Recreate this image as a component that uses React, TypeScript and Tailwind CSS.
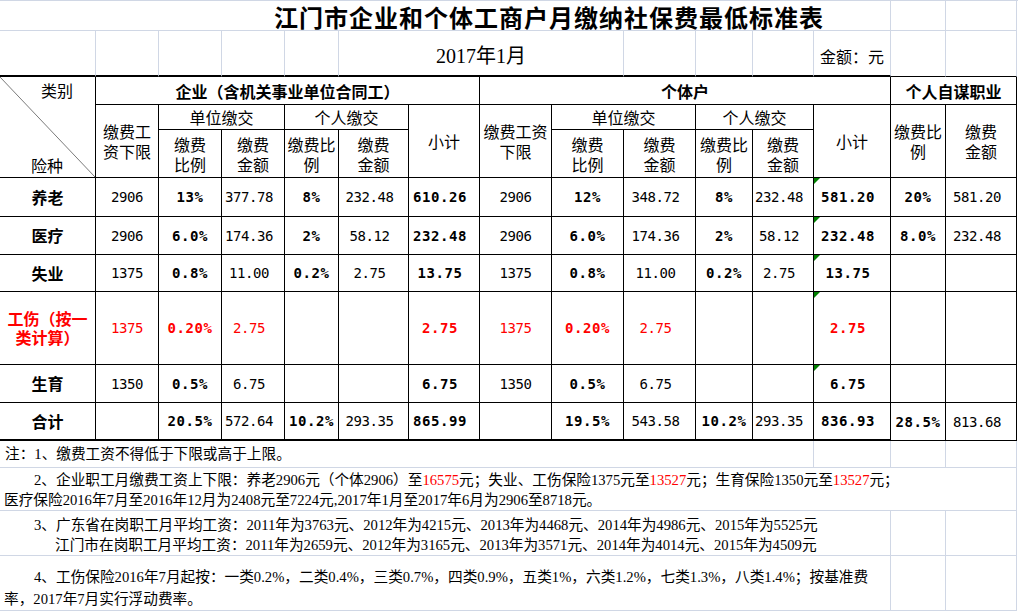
import React from 'react'

const CN = "font-['Noto_Sans_CJK_SC',sans-serif]"
const SERIF = "font-['Liberation_Serif','Noto_Sans_CJK_SC',serif]"
const NUM = "font-['DejaVu_Sans_Mono','Noto_Sans_CJK_SC',monospace] text-[14px]"

type CellProps = {
  className?: string
  grid?: boolean
  thick?: boolean
  children?: React.ReactNode
}

// one spreadsheet cell: draws its own right and bottom line
function Cell({ className = '', grid = false, thick = false, children }: CellProps) {
  const color = grid ? 'border-[#d0d7e5]' : 'border-black'
  const bottom = thick ? 'border-b-2' : 'border-b'
  return (
    <div className={`relative flex items-center justify-center text-center border-r ${bottom} ${color} ${className}`}>
      {children}
    </div>
  )
}

// two-line header label
function Two({ a, b }: { a: string; b: string }) {
  return (
    <div className="flex flex-col items-center">
      <span>{a}</span>
      <span>{b}</span>
    </div>
  )
}

type DataRow = {
  label: React.ReactNode
  red?: boolean
  vals: string[]
  tri?: boolean
  last?: boolean
}

const rows: DataRow[] = [
  {
    label: '养老',
    tri: true,
    vals: ['2906', '13%', '377.78', '8%', '232.48', '610.26', '2906', '12%', '348.72', '8%', '232.48', '581.20', '20%', '581.20'],
  },
  {
    label: '医疗',
    tri: true,
    vals: ['2906', '6.0%', '174.36', '2%', '58.12', '232.48', '2906', '6.0%', '174.36', '2%', '58.12', '232.48', '8.0%', '232.48'],
  },
  {
    label: '失业',
    tri: true,
    vals: ['1375', '0.8%', '11.00', '0.2%', '2.75', '13.75', '1375', '0.8%', '11.00', '0.2%', '2.75', '13.75', '', ''],
  },
  {
    label: '工伤（按一类计算）',
    red: true,
    tri: true,
    vals: ['1375', '0.20%', '2.75', '', '', '2.75', '1375', '0.20%', '2.75', '', '', '2.75', '', ''],
  },
  {
    label: '生育',
    tri: true,
    vals: ['1350', '0.5%', '6.75', '', '', '6.75', '1350', '0.5%', '6.75', '', '', '6.75', '', ''],
  },
  {
    label: '合计',
    last: true,
    vals: ['', '20.5%', '572.64', '10.2%', '293.35', '865.99', '', '19.5%', '543.58', '10.2%', '293.35', '836.93', '28.5%', '813.68'],
  },
]

const boldCols = [1, 3, 5, 7, 9, 11, 12]
const amountCols = [2, 4, 5, 8, 10, 11, 13]

function Triangle() {
  return (
    <svg className="absolute left-0 top-0" width="6" height="6" viewBox="0 0 6 6">
      <polygon points="0,0 6,0 0,6" fill="#008000" />
    </svg>
  )
}

function Red({ children }: { children: React.ReactNode }) {
  return <span className="text-[#ff0000]">{children}</span>
}

export default function App() {
  return (
    <div className="w-[1018px] h-[612px] bg-white overflow-hidden text-black">
      <div
        className={`grid border-t border-[#d0d7e5] grid-cols-[96px_63px_63px_63px_54px_70px_71px_72px_72px_72px_57px_61px_77px_55px_71px] grid-rows-[30px_46px_28px_25px_48px_39px_38px_37px_73px_38px_38px_27px_43px_45px_55px] ${CN} text-[16px] leading-[20px]`}
      >
        {/* title */}
        <Cell grid className="col-span-13 justify-start pl-[274px] pt-[2px]">
          <span className="text-[24px] font-bold tracking-[1px] leading-[28px]">
            江门市企业和个体工商户月缴纳社保费最低标准表
          </span>
        </Cell>
        <Cell grid />
        <Cell grid />

        {/* date row */}
        <Cell grid thick className="border-b-black" />
        <Cell grid thick className="border-b-black" />
        <Cell grid thick className="border-b-black" />
        <Cell grid thick className="border-b-black" />
        <Cell grid thick className="border-b-black" />
        <Cell grid thick className={`col-span-4 border-b-black ${SERIF} text-[20px] pt-[6px]`}>
          2017年1月
        </Cell>
        <Cell grid thick className="border-b-black" />
        <Cell grid thick className="border-b-black" />
        <Cell grid thick className="border-b-black" />
        <Cell grid thick className="border-b-black justify-start items-end pl-[6px] pb-[9px]">
          金额：元
        </Cell>
        <Cell grid className="border-b-black" />
        <Cell grid className="border-b-black" />

        {/* header */}
        <Cell className="row-span-3 flex-col !items-stretch !justify-between">
          <svg className="absolute inset-0 w-full h-full" viewBox="0 0 100 100" preserveAspectRatio="none">
            <line x1="0" y1="0" x2="100" y2="100" stroke="#7a7a7a" strokeWidth="1" vectorEffect="non-scaling-stroke" />
          </svg>
          <span className="self-end pr-[22px] pt-[3px]">类别</span>
          <span className="self-start pl-[31px] pb-[2px]">险种</span>
        </Cell>
        <Cell className="col-span-6 font-bold">企业（含机关事业单位合同工）</Cell>
        <Cell className="col-span-6 font-bold">个体户</Cell>
        <Cell className="col-span-2 font-bold">个人自谋职业</Cell>

        <Cell className="row-span-2">缴费工资下限</Cell>
        <Cell className="col-span-2">单位缴交</Cell>
        <Cell className="col-span-2">个人缴交</Cell>
        <Cell className="row-span-2">小计</Cell>
        <Cell className="row-span-2">缴费工资下限</Cell>
        <Cell className="col-span-2">单位缴交</Cell>
        <Cell className="col-span-2">个人缴交</Cell>
        <Cell className="row-span-2">小计</Cell>
        <Cell className="row-span-2">缴费比例</Cell>
        <Cell className="row-span-2">
          <Two a="缴费" b="金额" />
        </Cell>

        <Cell>
          <Two a="缴费" b="比例" />
        </Cell>
        <Cell>
          <Two a="缴费" b="金额" />
        </Cell>
        <Cell>缴费比例</Cell>
        <Cell>
          <Two a="缴费" b="金额" />
        </Cell>
        <Cell>
          <Two a="缴费" b="比例" />
        </Cell>
        <Cell>
          <Two a="缴费" b="金额" />
        </Cell>
        <Cell>缴费比例</Cell>
        <Cell>
          <Two a="缴费" b="金额" />
        </Cell>

        {/* data */}
        {rows.map((r, ri) => (
          <React.Fragment key={ri}>
            <Cell thick={r.last} className={`font-bold px-[4px] leading-[19px] ${r.red ? 'text-[#ff0000]' : ''}`}>
              {r.label}
            </Cell>
            {r.vals.map((v, i) => (
              <Cell
                key={i}
                thick={r.last && i < 12}
                className={`${NUM} ${boldCols.includes(i) ? 'font-bold tracking-[0.6px]' : 'tracking-[-0.4px]'} ${
                  amountCols.includes(i) ? 'pr-[8px]' : ''
                } ${r.red ? 'text-[#ff0000]' : ''}`}
              >
                {i === 11 && r.tri && <Triangle />}
                {v}
              </Cell>
            ))}
          </React.Fragment>
        ))}

        {/* notes */}
        <Cell grid className={`col-span-12 justify-start pl-[5px] ${SERIF} text-[14.67px]`}>
          注：1、缴费工资不得低于下限或高于上限。
        </Cell>
        <Cell grid />
        <Cell grid />
        <Cell grid />

        <Cell grid className={`col-span-15 flex-col !items-start !justify-end ${SERIF} text-[14.67px] whitespace-nowrap`}>
          <div className="pl-[34px]">
            2、企业职工月缴费工资上下限：养老2906元（个体2906）至<Red>16575</Red>元；失业、工伤保险1375元至
            <Red>13527</Red>元；生育保险1350元至<Red>13527</Red>元；
          </div>
          <div className="pl-[4px]">
            医疗保险2016年7月至2016年12月为2408元至7224元,2017年1月至2017年6月为2906至8718元。
          </div>
        </Cell>

        <Cell grid className={`col-span-13 flex-col !items-start !justify-end ${SERIF} text-[14.67px] whitespace-nowrap`}>
          <div className="pl-[34px]">
            3、广东省在岗职工月平均工资：2011年为3763元、2012年为4215元、2013年为4468元、2014年为4986元、2015年为5525元
          </div>
          <div className="pl-[55px]">
            江门市在岗职工月平均工资：2011年为2659元、2012年为3165元、2013年为3571元、2014年为4014元、2015年为4509元
          </div>
        </Cell>
        <Cell grid />
        <Cell grid />

        <Cell grid className={`col-span-13 flex-col !items-start !justify-end ${SERIF} text-[14.67px] leading-[22px] whitespace-nowrap`}>
          <div className="pl-[34px]">
            4、工伤保险2016年7月起按：一类0.2%，二类0.4%，三类0.7%，四类0.9%，五类1%，六类1.2%，七类1.3%，八类1.4%；按基准费
          </div>
          <div className="pl-[4px]">率，2017年7月实行浮动费率。</div>
        </Cell>
        <Cell grid />
        <Cell grid />
      </div>
    </div>
  )
}
